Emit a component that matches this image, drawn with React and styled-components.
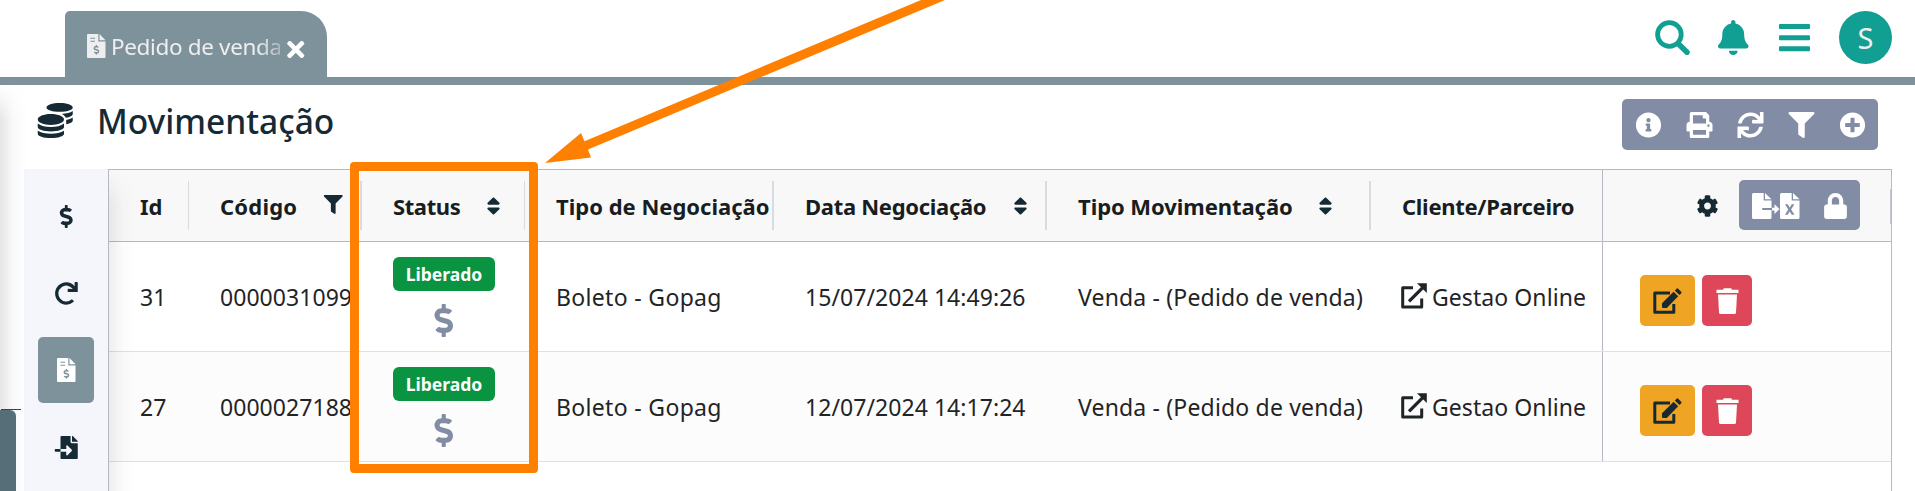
import React from "react";
import styled, { createGlobalStyle } from "styled-components";
import {
  FaBell, FaInfoCircle, FaPrint, FaSync, FaFilter, FaPlusCircle,
  FaCog, FaLock, FaDollarSign, FaRedo,
  FaFileImport, FaCoins, FaTimes, FaSort,
} from "react-icons/fa";

const Global = createGlobalStyle`
  * { box-sizing: border-box; }
  body { margin: 0; background: #fff; overflow: hidden; font-family: "Noto Sans", "Open Sans", sans-serif; color: #1f2427; }
`;

const ink = "#152a35";
const steel = "#7e929c";
const slate = "#828da5";
const teal = "#129f93";
const rule = "#b5bac2";

const Page = styled.div`
  position: relative;
  height: 491px;
  display: flex;
  flex-direction: column;
  overflow: hidden;
`;
const Icon = styled.span`
  display: inline-flex;
  flex: none;
  align-items: center;
  justify-content: center;
  width: ${(p) => p.$w}px;
  height: ${(p) => p.$h || p.$size}px;
  color: ${(p) => p.$color || "inherit"};
  > svg { flex: none; width: ${(p) => p.$size * 1.5}px; height: ${(p) => p.$size}px; }
`;
const Glyph = styled.svg`
  display: block;
  flex: none;
`;
const Label = styled.span`
  letter-spacing: ${(p) => p.$ls || 0}px;
  white-space: nowrap;
`;

const TopBar = styled.header`
  flex: none;
  height: 85px;
  border-bottom: 8px solid ${steel};
  padding: 11px 23px 0 65px;
  display: flex;
  justify-content: space-between;
  align-items: flex-start;
`;
const Tab = styled.div`
  width: 262px;
  height: 66px;
  padding: 0 0 0 22px;
  display: flex;
  background: ${steel};
  color: #eee;
  border-radius: 5px 26px 0 0;
`;
const TabIcon = styled.div`padding-top: 23px; width: 24px;`;
const TabText = styled.div`
  width: 169px;
  white-space: nowrap;
  font-size: 22.5px;
  line-height: 30px;
  padding-top: 21px;
  mask-image: linear-gradient(90deg, #000 147px, rgba(0,0,0,.4) 169px);
`;
const TabClose = styled.div`padding: 26px 0 0 7px; color: #fff;`;
const TopActions = styled.div`display: flex; color: ${teal};`;
const ActionSlot = styled.div`
  width: ${(p) => p.$w}px;
  padding-top: 9px;
`;
const Avatar = styled.div`
  width: 53px;
  height: 53px;
  border-radius: 50%;
  background: ${teal};
  color: #eee;
  font-size: 29px;
  line-height: 54px;
  text-align: center;
`;

const TitleRow = styled.div`
  flex: none;
  height: 84px;
  padding: 14px 37px 0 38px;
  display: flex;
  align-items: flex-start;
`;
const Title = styled.h1`
  margin: 0;
  flex: 1;
  padding: 2px 0 0 24px;
  font-size: 33.5px;
  font-weight: 500;
  line-height: 40px;
  color: ${ink};
`;
const Toolbar = styled.div`
  width: 256px;
  height: 51px;
  display: flex;
  align-items: center;
  justify-content: space-between;
  padding: 0 13px;
  border-radius: 5px;
  background: ${slate};
  color: #fff;
`;

const Workspace = styled.div`
  flex: 1;
  display: flex;
  padding: 0 23px 0 24px;
`;
const SideNav = styled.nav`
  width: 84px;
  background: #f4f6fb;
  padding: 14px 14px 0;
  display: flex;
  flex-direction: column;
  gap: 11px;
  color: ${ink};
`;
const SideButton = styled.div`
  flex: none;
  height: 66px;
  display: flex;
  align-items: center;
  justify-content: center;
  border-radius: 5px;
  background: ${(p) => (p.$active ? steel : "transparent")};
  color: ${(p) => (p.$active ? "#fff" : ink)};
`;

const Table = styled.div`
  flex: 1;
  border: 1px solid ${rule};
  border-bottom: 0;
`;
const columns = "80px 173px 163px 249px 273px 324px 231px 1fr";
const HeadRow = styled.div`
  display: grid;
  grid-template-columns: ${columns};
  height: 72px;
  background: #f8f8f8;
  border-bottom: 1px solid ${rule};
`;
const HeadCell = styled.div`
  display: flex;
  align-items: center;
  padding-left: 31px;
  font-weight: 700;
  font-size: 22px;
  line-height: 30px;
  background: linear-gradient(#d8dce1, #d8dce1) right center / ${(p) => p.$sep}px 49px no-repeat;
  color: #171d21;
`;
const SortSlot = styled.div`
  margin-left: auto;
  padding-right: ${(p) => p.$r}px;
  padding-bottom: ${(p) => p.$up || 0}px;
  color: ${ink};
  display: flex;
`;
const PinnedHead = styled.div`
  border-left: 1px solid ${rule};
  display: flex;
  align-items: center;
  padding-left: 93px;
  gap: 21px;
  color: ${ink};
  background: linear-gradient(#c3c7d0, #c3c7d0) right 53% / 1px 35px no-repeat;
`;
const ExportGroup = styled.div`
  width: 121px;
  height: 50px;
  border-radius: 5px;
  background: ${slate};
  color: #fff;
  display: flex;
  align-items: center;
  justify-content: space-between;
  padding: 2px 13px 0;
  margin-bottom: 1px;
`;
const Row = styled.div`
  display: grid;
  grid-template-columns: ${columns};
  height: 110px;
  background: ${(p) => (p.$alt ? "#fcfcfc" : "#fff")};
  border-bottom: 1px solid #dfdfe9;
`;
const Cell = styled.div`
  min-width: 0;
  display: flex;
  align-items: center;
  padding: 0 0 0 31px;
  font-size: 23px;
  line-height: 30px;
  overflow: hidden;
`;
const LinkIcon = styled.span`
  display: flex;
  padding-bottom: 2px;
  margin: 0 5px 0 -1px;
`;
const StatusCell = styled.div`
  padding: 15px 0 0 31px;
  width: 133px;
  display: flex;
  flex-direction: column;
  align-items: center;
  gap: 13px;
  color: ${slate};
`;
const Badge = styled.div`
  width: 102px;
  height: 34px;
  border-radius: 6px;
  background: #0a9442;
  color: #fff;
  font-size: 17.5px;
  font-weight: 700;
  line-height: 35px;
  text-align: center;
`;
const PinnedCell = styled.div`
  border-left: 1px solid ${rule};
  padding: 33px 0 0 37px;
  display: flex;
  align-items: flex-start;
  gap: 7px;
`;
const RowButton = styled.div`
  width: ${(p) => p.$w}px;
  height: 51px;
  border-radius: 5px;
  background: ${(p) => p.$bg};
  color: ${(p) => p.$fg};
  display: flex;
  align-items: center;
  justify-content: center;
`;

const EdgeShadow = styled.div`
  position: absolute;
  left: ${(p) => p.$x}px;
  top: ${(p) => p.$y}px;
  width: 27px;
  bottom: 0;
  background: linear-gradient(90deg, rgba(0,0,0,${(p) => p.$a}), rgba(0,0,0,${(p) => p.$a / 4}) 50%, transparent);
  mask-image: linear-gradient(transparent, #000 36px);
  pointer-events: none;
`;
const DrawerEdge = styled.div`
  position: absolute;
  left: 0;
  top: 410px;
  width: 16px;
  bottom: 0;
  background: #566e78;
  border-radius: 0 6px 0 0;
`;
const DrawerLine = styled.div`
  position: absolute;
  left: 1px;
  top: 409px;
  width: 20px;
  height: 1px;
  background: #33474b;
`;
const Highlight = styled.div`
  position: absolute;
  left: 350px;
  top: 162px;
  width: 188px;
  height: 311px;
  border: 9px solid #ff8000;
  border-radius: 4px;
`;
const Arrow = styled.svg`
  position: absolute;
  left: 540px;
  top: 0;
`;

const SearchIcon = () => (
  <Glyph width="35" height="35" viewBox="0 0 35 35" fill="none" stroke="currentColor">
    <circle cx="14.400" cy="14.500" r="11.800" strokeWidth="4.800" />
    <path d="M23.300 23.800 32 32.300" strokeWidth="5.500" strokeLinecap="round" />
  </Glyph>
);
const MenuIcon = () => (
  <Glyph width="31" height="35" viewBox="0 0 31 35" fill="currentColor">
    <rect y="4" width="31" height="5" rx="1" />
    <rect y="15.200" width="31" height="5" rx="1" />
    <rect y="26.300" width="31" height="5" rx="1" />
  </Glyph>
);
const InvoiceIcon = () => (
  <Glyph width="19" height="24" viewBox="0 0 19 24" fill="currentColor">
    <path d="M1 0H11.300V7.500H18.500V23q0 1-1 1H1Q0 24 0 23V1Q0 0 1 0Z" />
    <path d="M12.500 0 18.500 6.300H12.500Z" />
    <path d="M3.500 4.300H8M3.500 7.300H8" stroke={steel} strokeWidth="1.100" />
    <FaDollarSign x="4.400" y="10.800" size="10" color={steel} />
  </Glyph>
);
const OpenIcon = () => (
  <Glyph width="26" height="26" viewBox="0 0 26 26" fill="none" stroke="currentColor">
    <path d="M12 4.800H1.700V24H20.700V15.500" strokeWidth="3" strokeLinejoin="round" />
    <path d="M8 18.300 21.500 4.800" strokeWidth="3.300" />
    <path d="M16 .2H25.800V10Z" fill="currentColor" stroke="none" />
  </Glyph>
);
const EditIcon = () => (
  <Glyph width="29" height="26" viewBox="0 0 29 26">
    <path d="M17 4.900H1.800V24.200H20.800V16" fill="none" stroke="currentColor" strokeWidth="3" strokeLinejoin="round" />
    <path d="M9 15.200 20.600 3.700 25.200 8.300 13.800 20H10Q9 20 9 19Z" fill="currentColor" />
    <path d="M21.800 2.500 23.600.7q.8-.7 1.600 0L28.200 3.700q.7.800 0 1.600L26.400 7.100Z" fill="currentColor" />
  </Glyph>
);
const TrashIcon = () => (
  <Glyph width="23" height="26" viewBox="0 0 23 26" fill="currentColor">
    <path d="M.5 1.800H7L7.800.3H15.200L16 1.800H22.500V5H.5Z" />
    <path d="M2 6.500H21L20 24.400Q19.900 26 18.300 26H4.700Q3.100 26 3 24.400Z" />
  </Glyph>
);
const ExportExcel = () => (
  <Glyph width="48" height="26" viewBox="0 0 48 26" fill="currentColor">
    <path d="M1.500 0H11.700V7.500H19.500V15H11q-1 0-1 1t1 1h8.500V24.500q0 1.500-1.500 1.500H1.500Q0 26 0 24.500V1.500Q0 0 1.500 0Z" />
    <path d="M13 0 19.500 6.300H13Z" />
    <path d="M20 14.800h2.500v-3.500l5 4.800-5 4.800v-3.500H20Z" />
    <path fillRule="evenodd" d="M29.500 0H39.700V7.500H47.500V24.500q0 1.500-1.500 1.500H29.500Q28 26 28 24.500V1.500Q28 0 29.500 0ZM33 11.300l3.300 5.200-3.400 5.300h2.700l2.100-3.400 2.100 3.400h2.700l-3.400-5.300 3.300-5.200h-2.700l-2 3.300-2-3.300Z" />
    <path d="M41 0 47.500 6.300H41Z" />
  </Glyph>
);

const Head = ({ text, ls, sep = 2, sort, up }) => (
  <HeadCell $sep={sep}>
    <Label $ls={ls}>{text}</Label>
    {sort && <SortSlot $r={sort} $up={up}>
      {up ? <Icon $w={19} $size={19}><FaFilter /></Icon> : <Icon $w={13} $h={24} $size={22}><FaSort /></Icon>}
    </SortSlot>}
  </HeadCell>
);

const rows = [
  { id: "31", code: "0000031099", date: "15/07/2024 14:49:26" },
  { id: "27", code: "0000027188", date: "12/07/2024 14:17:24" },
];

export default function App() {
  return (
    <Page>
      <Global />
      <TopBar>
        <Tab>
          <TabIcon><InvoiceIcon /></TabIcon>
          <TabText><Label $ls={-0.35}>Pedido de venda</Label></TabText>
          <TabClose><Icon $w={17} $size={25}><FaTimes /></Icon></TabClose>
        </Tab>
        <TopActions>
          <ActionSlot $w={63}><SearchIcon /></ActionSlot>
          <ActionSlot $w={61}><Icon $w={31} $size={35}><FaBell /></Icon></ActionSlot>
          <ActionSlot $w={60}><MenuIcon /></ActionSlot>
          <Avatar>S</Avatar>
        </TopActions>
      </TopBar>
      <TitleRow>
        <Icon $w={35} $size={35} $h={43} $color={ink}><FaCoins /></Icon>
        <Title>Movimentação</Title>
        <Toolbar>
          {[FaInfoCircle, FaPrint, FaSync, FaFilter, FaPlusCircle].map((I, i) => (
            <Icon key={i} $w={26} $size={26}><I /></Icon>
          ))}
        </Toolbar>
      </TitleRow>
      <Workspace>
        <SideNav>
          <SideButton><Icon $w={14} $size={23}><FaDollarSign /></Icon></SideButton>
          <SideButton><Icon $w={23} $size={23}><FaRedo /></Icon></SideButton>
          <SideButton $active><InvoiceIcon /></SideButton>
          <SideButton><Icon $w={23} $size={23}><FaFileImport /></Icon></SideButton>
        </SideNav>
        <Table>
          <HeadRow>
            <Head text="Id" sep={1} />
            <Head text="Código" sort={19} up={2} ls={0.2} />
            <Head text="Status" sort={25} sep={1} ls={-0.4} />
            <Head text="Tipo de Negociação" />
            <Head text="Data Negociação" sort={20} ls={-0.3} />
            <Head text="Tipo Movimentação" sort={39} ls={-0.06} />
            <Head text="Cliente/Parceiro" sep={0} ls={-0.29} />
            <PinnedHead>
              <Icon $w={22} $size={22}><FaCog /></Icon>
              <ExportGroup>
                <ExportExcel />
                <Icon $w={23} $size={26}><FaLock /></Icon>
              </ExportGroup>
            </PinnedHead>
          </HeadRow>
          {rows.map((r, i) => (
            <Row key={r.id} $alt={i % 2}>
              <Cell><Label>{r.id}</Label></Cell>
              <Cell><Label $ls={0.05}>{r.code}</Label></Cell>
              <StatusCell>
                <Badge>Liberado</Badge>
                <Icon $w={20} $size={33}><FaDollarSign /></Icon>
              </StatusCell>
              <Cell><Label $ls={0.33}>Boleto - Gopag</Label></Cell>
              <Cell><Label $ls={0.05}>{r.date}</Label></Cell>
              <Cell><Label $ls={0.17}>Venda - (Pedido de venda)</Label></Cell>
              <Cell>
                <LinkIcon><OpenIcon /></LinkIcon>
                <Label $ls={0.07}>Gestao Online</Label>
              </Cell>
              <PinnedCell>
                <RowButton $w={55} $bg="#f0a423" $fg={ink}><EditIcon /></RowButton>
                <RowButton $w={50} $bg="#de475a" $fg="#fff"><TrashIcon /></RowButton>
              </PinnedCell>
            </Row>
          ))}
        </Table>
      </Workspace>
      <EdgeShadow $x={0} $y={85} $a={0.1} />
      <EdgeShadow $x={109} $y={170} $a={0.07} />
      <DrawerEdge />
      <DrawerLine />
      <Highlight />
      <Arrow width="420" height="170" viewBox="540 0 420 170">
        <path d="M545 163 581 133 584.500 141.200 921 0H945L588 149.500 591 157.500Z" fill="#ff8000" />
      </Arrow>
    </Page>
  );
}
